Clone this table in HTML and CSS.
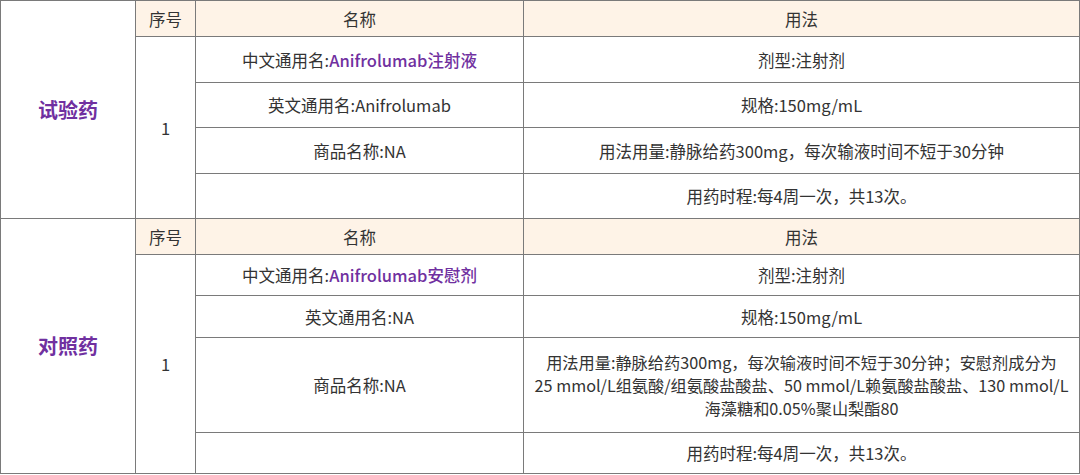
FILE: index.html
```html
<!DOCTYPE html>
<html lang="zh">
<head>
<meta charset="utf-8">
<link rel="stylesheet" href="styles.css">
</head>
<body>
<table class="drug-table">
  <colgroup>
    <col class="c-group">
    <col class="c-no">
    <col class="c-name">
    <col class="c-use">
  </colgroup>
  <tbody>
    <tr class="head r36">
      <td class="group" rowspan="5">试验药</td>
      <th>序号</th>
      <th>名称</th>
      <th>用法</th>
    </tr>
    <tr class="r46">
      <td class="no" rowspan="4">1</td>
      <td>中文通用名:<span class="hl">Anifrolumab注射液</span></td>
      <td>剂型:注射剂</td>
    </tr>
    <tr class="r45 light">
      <td>英文通用名:Anifrolumab</td>
      <td>规格:150mg/mL</td>
    </tr>
    <tr class="r46">
      <td>商品名称:NA</td>
      <td>用法用量:静脉给药300mg，每次输液时间不短于30分钟</td>
    </tr>
    <tr class="r45 light">
      <td></td>
      <td>用药时程:每4周一次，共13次。</td>
    </tr>
    <tr class="head r36 sect">
      <td class="group" rowspan="5">对照药</td>
      <th>序号</th>
      <th>名称</th>
      <th>用法</th>
    </tr>
    <tr class="r41">
      <td class="no" rowspan="4">1</td>
      <td>中文通用名:<span class="hl">Anifrolumab安慰剂</span></td>
      <td>剂型:注射剂</td>
    </tr>
    <tr class="r42 light">
      <td>英文通用名:NA</td>
      <td>规格:150mg/mL</td>
    </tr>
    <tr class="r95">
      <td>商品名称:NA</td>
      <td class="long">用法用量:静脉给药300mg，每次输液时间不短于30分钟；安慰剂成分为<br>25 mmol/L组氨酸/组氨酸盐酸盐、50 mmol/L赖氨酸盐酸盐、130 mmol/L<br>海藻糖和0.05%聚山梨酯80</td>
    </tr>
    <tr class="r41">
      <td></td>
      <td>用药时程:每4周一次，共13次。</td>
    </tr>
  </tbody>
</table>
</body>
</html>
```

FILE: styles.css
```css
html, body {
  margin: 0;
  padding: 0;
  background: #ffffff;
}
body {
  font-family: "Noto Sans CJK SC", "Noto Sans", sans-serif;
  color: #333333;
}
.drug-table {
  border-collapse: collapse;
  table-layout: fixed;
  width: 1079px;
  font-size: 16.5px;
}
.c-group { width: 135px; }
.c-no { width: 60px; }
.c-name { width: 328px; }
.c-use { width: 556px; }

.drug-table td,
.drug-table th {
  border: 1px solid #7a7a7a;
  text-align: center;
  vertical-align: middle;
  padding: 0 6px;
  font-weight: normal;
  line-height: 22px;
}
.drug-table tr.light td {
  border-top-color: #b4b4b4;
}
.drug-table tr.head th {
  background: #fef3e7;
  font-size: 16.5px;
}
.drug-table tr.sect td.group {
  border-top-color: #222222;
}
.drug-table tr.sect th {
  border-top-color: #555555;
}
.group {
  color: #7030a0;
  font-weight: bold !important;
  font-size: 20px;
}
.hl {
  color: #7030a0;
  font-weight: 500;
}
.drug-table td.long {
  font-size: 16.2px;
  line-height: 23px;
  letter-spacing: 0;
  padding: 0 2px;
  white-space: nowrap;
}
.r36 { height: 36px; }
.r41 { height: 41px; }
.r42 { height: 42px; }
.r45 { height: 45px; }
.r46 { height: 46px; }
.r95 { height: 95px; }
```
